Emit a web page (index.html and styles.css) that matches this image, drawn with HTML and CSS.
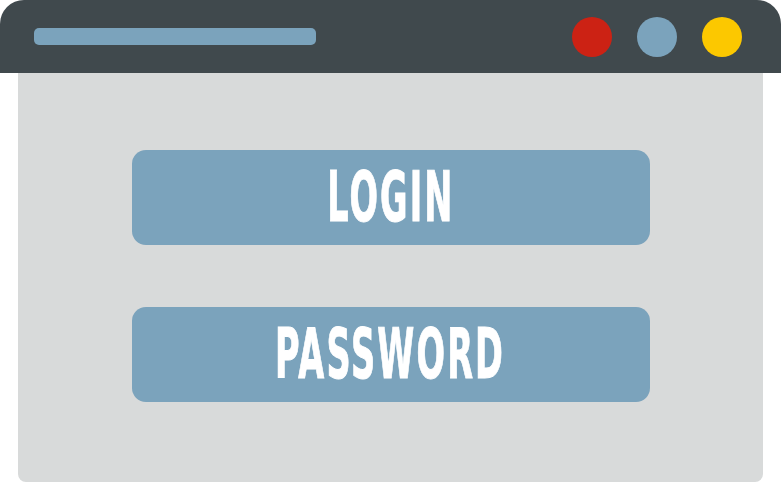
FILE: index.html
```html
<!DOCTYPE html>
<html lang="en">

<head>
    <meta charset="UTF-8">
    <meta name="viewport" content="width=device-width, initial-scale=1.0">
    <title>Login Window</title>
    <link rel="stylesheet" href="styles.css">
</head>

<body>
    <div class="window">
        <!-- Title bar -->
        <header class="title-bar">
            <div class="address-bar"></div>
            <div class="controls">
                <span class="dot dot-red"></span>
                <span class="dot dot-blue"></span>
                <span class="dot dot-yellow"></span>
            </div>
        </header>

        <!-- Window content -->
        <main class="panel">
            <div class="field"><span class="field-label">LOGIN</span></div>
            <div class="field"><span class="field-label">PASSWORD</span></div>
        </main>
    </div>
</body>

</html>
```

FILE: styles.css
```css
body {
    margin: 0;
    padding: 0;
    background-color: #ffffff;
    font-family: "DejaVu Sans Condensed", "DejaVu Sans", sans-serif;
}

.window {
    width: 781px;
}

.title-bar {
    height: 73px;
    background-color: #40494d;
    border-radius: 24px 24px 0 0;
    display: flex;
    align-items: center;
    justify-content: space-between;
    padding: 0 39px 0 34px;
    box-sizing: border-box;
}

.address-bar {
    width: 282px;
    height: 17px;
    background-color: #7ba3bc;
    border-radius: 5px;
}

.controls {
    display: flex;
    gap: 25px;
}

.dot {
    width: 40px;
    height: 40px;
    border-radius: 50%;
}

.dot-red {
    background-color: #cc2214;
}

.dot-blue {
    background-color: #7ba3bc;
}

.dot-yellow {
    background-color: #fcc800;
}

.panel {
    margin: 0 18px;
    height: 409px;
    background-color: #d8dada;
    border-radius: 0 0 8px 8px;
    padding-top: 77px;
    box-sizing: border-box;
    display: flex;
    flex-direction: column;
    align-items: center;
    gap: 62px;
}

.field {
    width: 518px;
    height: 95px;
    background-color: #7ba3bc;
    border-radius: 14px;
    display: flex;
    align-items: center;
    justify-content: center;
}

.field-label {
    display: inline-block;
    color: #ffffff;
    font-size: 69px;
    font-weight: bold;
    line-height: 1;
    letter-spacing: 4px;
    transform: scaleX(0.54);
    -webkit-text-stroke: 1px #ffffff;
}
```
